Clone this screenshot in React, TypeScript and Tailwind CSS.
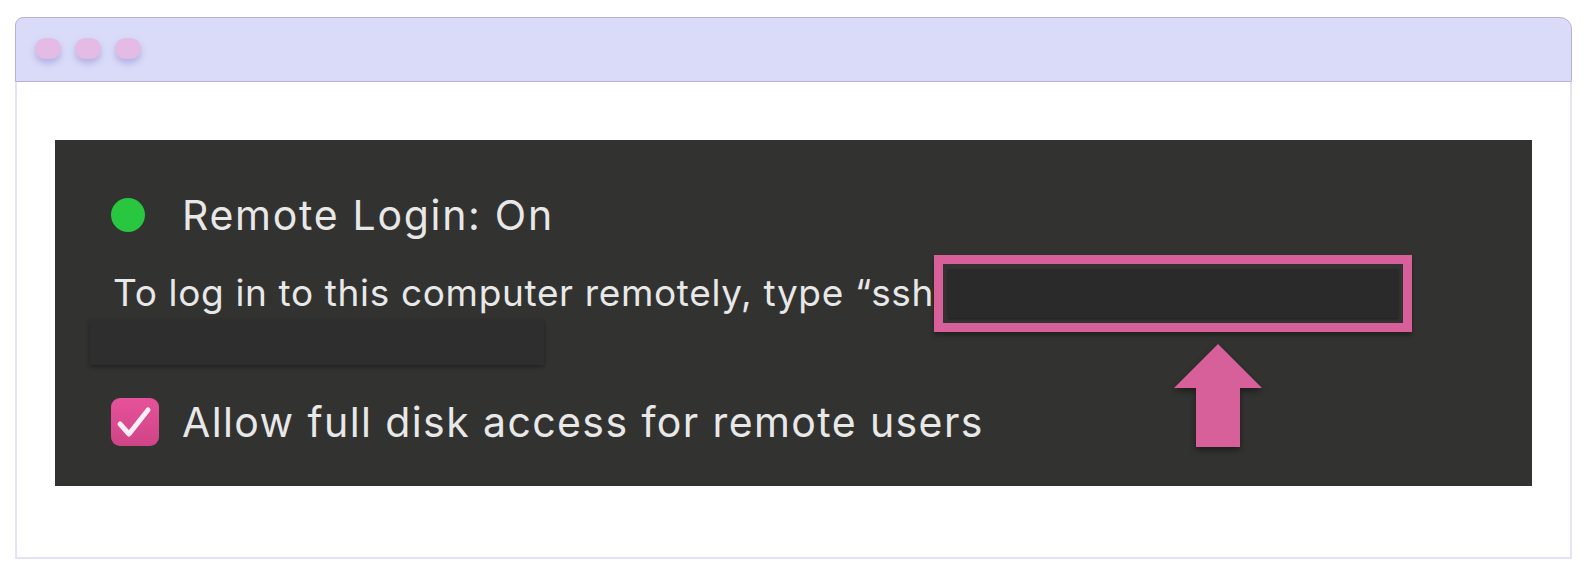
export default function App() {
  const font = { fontFamily: "Inter, 'Noto Sans', sans-serif" };

  return (
    <div className="w-[1586px] h-[582px] bg-white pt-[17px] pl-[15px]" style={font}>
      <div className="w-[1557px] flex flex-col">
        {/* title bar */}
        <div className="h-[65px] bg-[#d9dbf9] border border-[#b8b1d6] rounded-tl-[8px] rounded-tr-[12px] flex items-center gap-[14px] pl-[19px] pb-[2px]">
          {[0, 1, 2].map((i) => (
            <span
              key={i}
              className="w-[26px] h-[21px] rounded-full bg-[#e3bbe5] blur-[0.6px] shadow-[0_4px_6px_rgba(150,140,200,0.55)]"
            />
          ))}
        </div>

        {/* window body */}
        <div className="h-[477px] bg-white border-x-2 border-b-2 border-[#e6e0fa] pt-[58px] px-[38px]">
          <div className="relative bg-[#323231] text-[#e8e8e8] pl-[56px] pt-[51px] pb-[40px]">
            {/* status row */}
            <div className="flex items-center h-[48px]">
              <span className="w-[34px] h-[34px] rounded-full bg-[#29c73f]" />
              <span className="ml-[37px] text-[41px] leading-[48px] tracking-[1.7px]">Remote Login: On</span>
            </div>

            {/* ssh hint */}
            <div className="mt-[31px] flex items-center h-[46px]">
              <span className="ml-[2px] text-[37px] leading-[46px] tracking-[0.65px] whitespace-nowrap">
                To log in to this computer remotely, type “ssh
              </span>
              <div className="-my-[16px] h-[77px] w-[478px] border-[9px] border-[#d75f9a] shadow-[0_3px_4px_rgba(0,0,0,0.35)] p-[5px]">
                <div className="w-full h-full bg-[#2a2a2a] shadow-[0_1px_2px_rgba(0,0,0,0.4)]" />
              </div>
            </div>

            {/* redacted line */}
            <div className="mt-[3px] -ml-[21px] w-[454px] h-[46px] bg-[#2e2e2e] shadow-[0_2px_4px_rgba(0,0,0,0.35)]" />

            {/* checkbox row */}
            <div className="mt-[33px] flex items-center h-[48px]">
              <span className="w-[48px] h-[48px] rounded-[9px] bg-gradient-to-b from-[#e6529a] to-[#cf4487] flex items-center justify-center">
                <svg width="48" height="48" viewBox="0 0 48 48">
                  <path
                    d="M9 26 L18 36 L37 12"
                    fill="none"
                    stroke="#fdeef5"
                    strokeWidth="5"
                    strokeLinecap="round"
                    strokeLinejoin="round"
                  />
                </svg>
              </span>
              <span className="ml-[23px] text-[41px] leading-[48px] tracking-[1.4px]">
                Allow full disk access for remote users
              </span>
            </div>

            {/* annotation arrow */}
            <svg
              className="absolute left-[1119px] top-[204px] drop-shadow-[0_3px_3px_rgba(0,0,0,0.45)]"
              width="88"
              height="103"
              viewBox="0 0 88 103"
            >
              <polygon points="44,0 88,44 66,44 66,103 22,103 22,44 0,44" fill="#d75f9a" />
            </svg>
          </div>
        </div>
      </div>
    </div>
  );
}
